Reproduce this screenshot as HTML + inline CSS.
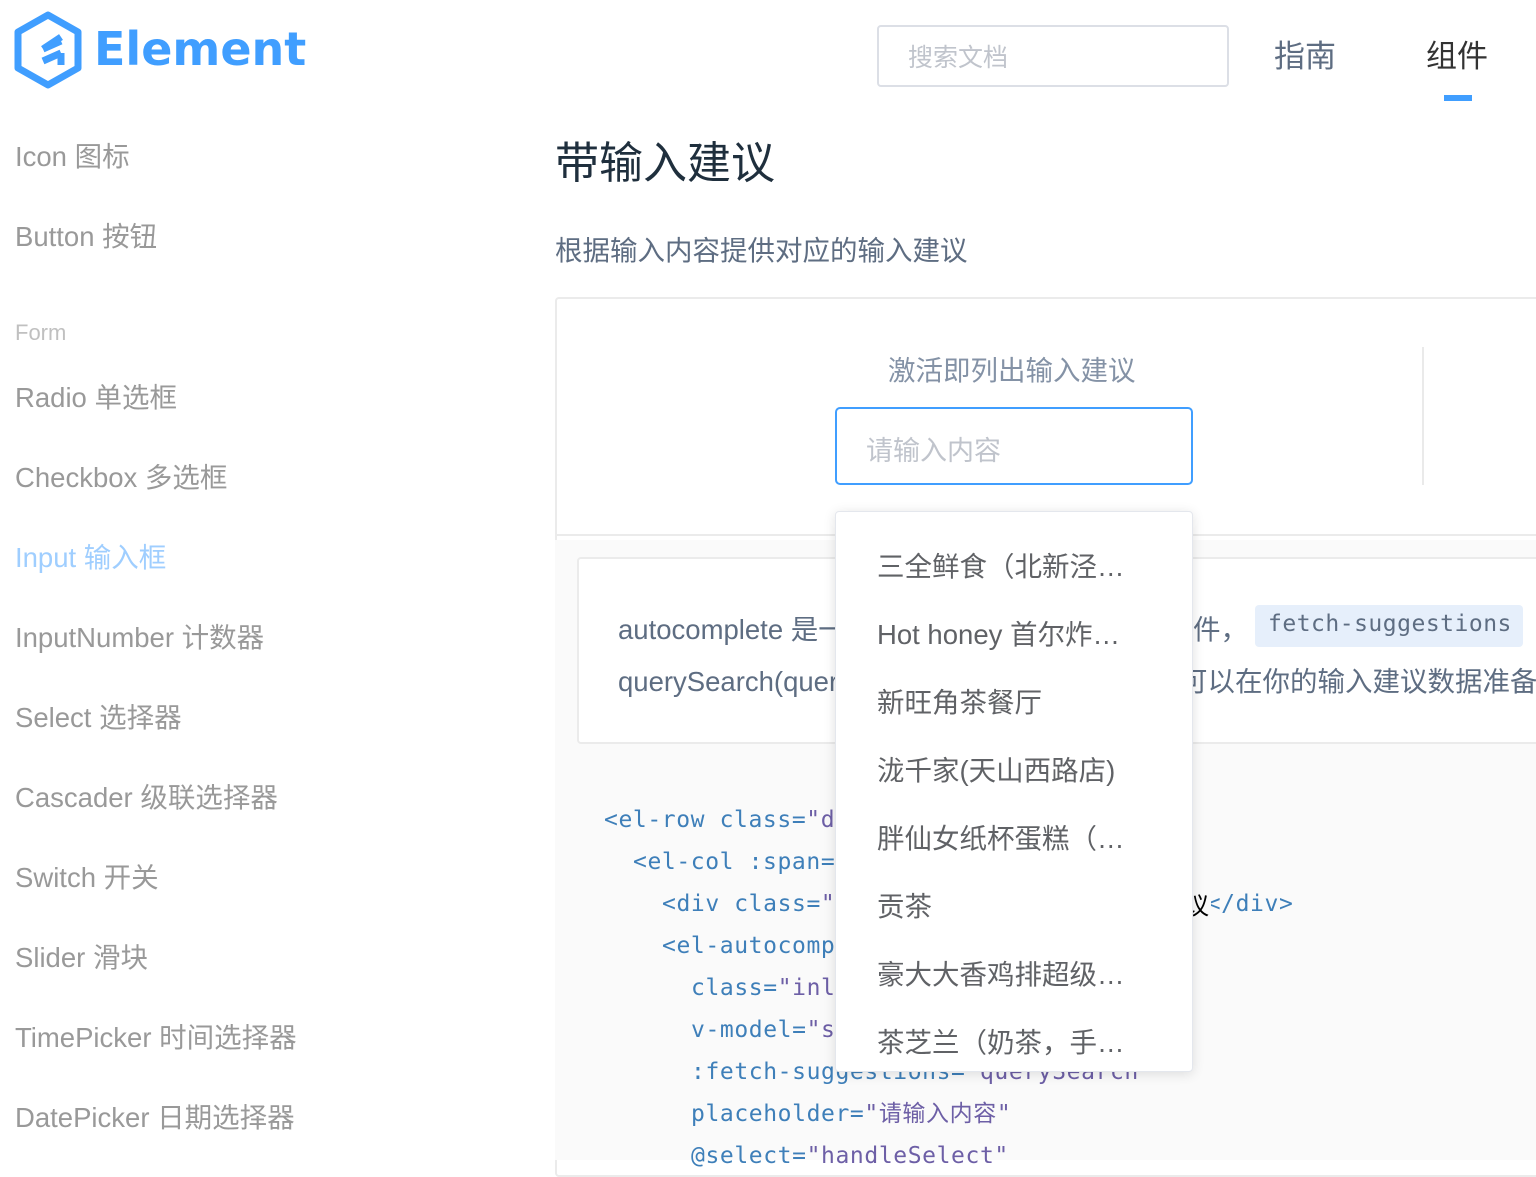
<!DOCTYPE html>
<html><head><meta charset="utf-8"><style>
*{margin:0;padding:0;box-sizing:border-box}
body{width:1536px;height:1160px;overflow:hidden;background:#fff;font-family:"Liberation Sans","Noto Sans CJK SC",sans-serif;position:relative}
.a{position:absolute;white-space:nowrap}
.nav{font-size:27.5px;color:#999;left:15px;line-height:30px}
.code{position:absolute;left:555px;top:540px;width:981px;height:620px;background:#fafafa}
.cl{position:absolute;font-family:"DejaVu Sans Mono","Liberation Mono","Noto Sans CJK SC",monospace;font-size:23px;letter-spacing:0.6px;color:#3e7fb9;line-height:30px;white-space:nowrap}
.s{color:#6d5fa6}
.dd{position:absolute;left:835px;top:511px;width:358px;height:561px;background:#fff;border:1px solid #e4e7ed;border-radius:4px;box-shadow:0 2px 12px rgba(0,0,0,.12)}
.di{position:absolute;left:41px;font-size:27.5px;color:#606266;white-space:nowrap;line-height:30px}
</style></head><body>
<svg class="a" style="left:13px;top:11px" width="70" height="78" viewBox="0 0 70 78">
<polygon points="35,4 65,21 65,57 35,74 5,57 5,21" fill="none" stroke="#409eff" stroke-width="7" stroke-linejoin="round"/>
<path d="M48 30 L30 38 M48 42 L30 50 M30 38 L48 26 M48 42 L48 54" stroke="#409eff" stroke-width="7" fill="none"/>
</svg>
<div class="a" style="left:94px;top:22px;font-size:46px;font-weight:bold;color:#409eff;font-family:'DejaVu Sans','Liberation Sans',sans-serif">Element</div>
<div class="a" style="left:877px;top:25px;width:352px;height:62px;border:2px solid #dcdfe6;border-radius:4px"></div>
<div class="a" style="left:908px;top:38px;font-size:25px;color:#c0c4cc">搜索文档</div>
<div class="a" style="left:1274px;top:31px;font-size:31px;color:#5e6d82">指南</div>
<div class="a" style="left:1426px;top:31px;font-size:31px;color:#333">组件</div>
<div class="a" style="left:1444px;top:95px;width:28px;height:6px;background:#409eff"></div>

<div class="a nav" style="top:142px">Icon 图标</div>
<div class="a nav" style="top:222px">Button 按钮</div>
<div class="a" style="left:15px;top:320px;font-size:22px;color:#c0c0c0">Form</div>
<div class="a nav" style="top:383px">Radio 单选框</div>
<div class="a nav" style="top:463px">Checkbox 多选框</div>
<div class="a nav" style="top:543px;color:#9fceff">Input 输入框</div>
<div class="a nav" style="top:623px">InputNumber 计数器</div>
<div class="a nav" style="top:703px">Select 选择器</div>
<div class="a nav" style="top:783px">Cascader 级联选择器</div>
<div class="a nav" style="top:863px">Switch 开关</div>
<div class="a nav" style="top:943px">Slider 滑块</div>
<div class="a nav" style="top:1023px">TimePicker 时间选择器</div>
<div class="a nav" style="top:1103px">DatePicker 日期选择器</div>

<div class="a" style="left:555px;top:127px;font-size:44px;color:#1f2f3d">带输入建议</div>
<div class="a" style="left:555px;top:228px;font-size:27.5px;color:#5e6d82">根据输入内容提供对应的输入建议</div>

<div class="a" style="left:555px;top:297px;width:1000px;height:880px;border:2px solid #ebebeb;border-radius:4px"></div>
<div class="a" style="left:557px;top:534px;width:990px;height:2px;background:#ebebeb"></div>
<div class="code"></div>
<div class="a" style="left:1422px;top:347px;width:2px;height:138px;background:#eaeaea"></div>
<div class="a" style="left:888px;top:348px;font-size:27.5px;color:#8492a6">激活即列出输入建议</div>
<div class="a" style="left:835px;top:407px;width:358px;height:78px;border:2px solid #409eff;border-radius:5px"></div>
<div class="a" style="left:866px;top:429px;font-size:27px;color:#c0c4cc">请输入内容</div>

<div class="a" style="left:577px;top:557px;width:980px;height:187px;background:#fff;border:2px solid #ebebeb;border-radius:4px"></div>
<div class="a" style="left:618px;top:607px;font-size:27.5px;color:#5e6d82">autocomplete 是一个可带输入建议的输入框组件，</div>
<div class="a" style="left:1255px;top:605px;width:268px;height:42px;background:#e6effb;border-radius:4px"></div>
<div class="a" style="left:1268px;top:611px;font-family:'DejaVu Sans Mono',monospace;font-size:23px;color:#5e6d82;letter-spacing:0.5px">fetch-suggestions</div>
<div class="a" style="left:618px;top:659px;font-size:27.5px;color:#5e6d82">querySearch(queryString, cb) 在这里你可以在你的输入建议数据准备</div>
<div class="a" style="left:1193px;top:607px;font-size:27.5px;color:#5e6d82;background:#fff;width:60px">件，</div>
<div class="a" style="left:1180px;top:659px;font-size:27.5px;color:#5e6d82;background:#fff">可以在你的输入建议数据准备</div>

<div class="cl" style="left:604px;top:805px">&lt;el-row class=<span class="s">"demo-autocomplete"</span>&gt;</div>
<div class="cl" style="left:633px;top:847px">&lt;el-col :span=<span class="s">"12"</span>&gt;</div>
<div class="cl" style="left:662px;top:889px">&lt;div class=<span class="s">"sub-title"</span>&gt;<span style="color:#000;background:#fafafa">激活即列出输入建议</span>&lt;/div&gt;</div>
<div class="cl" style="left:662px;top:931px">&lt;el-autocomplete</div>
<div class="cl" style="left:691px;top:973px">class=<span class="s">"inline-input"</span></div>
<div class="cl" style="left:691px;top:1015px">v-model=<span class="s">"state1"</span></div>
<div class="cl" style="left:691px;top:1057px">:fetch-suggestions=<span class="s">"querySearch"</span></div>
<div class="cl" style="left:691px;top:1099px">placeholder=<span class="s">"请输入内容"</span></div>
<div class="cl" style="left:691px;top:1141px">@select=<span class="s">"handleSelect"</span></div>
<div class="a" style="left:1193px;top:889px;width:18px;height:32px;background:#fafafa;font-size:24px;color:#000;line-height:30px;font-family:'Noto Sans CJK SC',sans-serif;overflow:hidden;text-indent:-8px">议</div>

<div class="dd">
<div class="di" style="top:40px">三全鲜食（北新泾…</div>
<div class="di" style="top:108px">Hot honey 首尔炸…</div>
<div class="di" style="top:176px">新旺角茶餐厅</div>
<div class="di" style="top:244px">泷千家(天山西路店)</div>
<div class="di" style="top:312px">胖仙女纸杯蛋糕（…</div>
<div class="di" style="top:380px">贡茶</div>
<div class="di" style="top:448px">豪大大香鸡排超级…</div>
<div class="di" style="top:516px">茶芝兰（奶茶，手…</div>
</div>
</body></html>
